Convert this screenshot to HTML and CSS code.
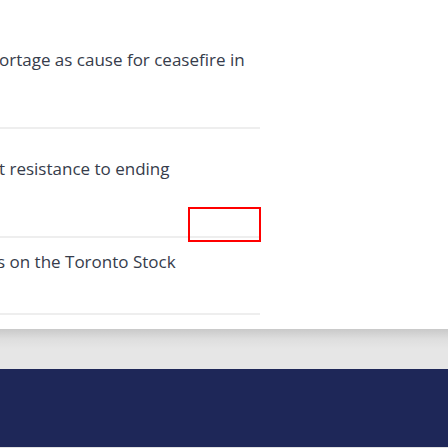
FILE: index.html
```html
<!DOCTYPE html>
<html>
<head>
<meta charset="utf-8">
<link rel="stylesheet" href="styles.css">
</head>
<body>
<div class="page">
  <ul class="list">
    <li class="item item-1"><span class="title">ortage as cause for ceasefire in</span></li>
    <li class="item item-2"><span class="title">t resistance to ending</span></li>
    <li class="item item-3"><span class="title">s on the Toronto Stock</span></li>
  </ul>
  <div class="highlight"></div>
  <div class="spacer"></div>
  <div class="band"></div>
  <div class="footer"></div>
</div>
</body>
</html>
```
FILE: styles.css
```css
html, body {
  margin: 0;
  padding: 0;
  background: #ffffff;
}
.page {
  position: relative;
  width: 448px;
  height: 448px;
  overflow: hidden;
  display: flex;
  flex-direction: column;
  font-family: "Open Sans", "Liberation Sans", sans-serif;
}
.list {
  list-style: none;
  margin: 0;
  padding: 0;
  width: 260px;
  overflow: hidden;
}
.item {
  border-bottom: 2px solid #eeeeee;
  font-size: 17px;
  line-height: 24px;
  color: #363c4b;
  white-space: nowrap;
}
.title {
  display: block;
  margin-left: -1px;
}
.item-1 {
  padding-top: 48px;
  padding-bottom: 55px;
}
.item-2 {
  padding-top: 28px;
  padding-bottom: 55px;
}
.item-3 {
  padding-top: 12px;
  padding-bottom: 39px;
}
.item-3 .title {
  margin-left: -3px;
}
.highlight {
  position: absolute;
  left: 188px;
  top: 207px;
  width: 69px;
  height: 31px;
  border: 2px solid #ff0000;
}
.spacer {
  height: 14px;
}
.band {
  height: 40px;
  background: linear-gradient(to bottom, #c9c9c9 0px, #dedede 10px, #e6e6e6 20px, #e6e6e6 100%);
}
.footer {
  height: 78px;
  background: #1e2758;
  border-bottom: 1px solid #e2e2e2;
}
```
